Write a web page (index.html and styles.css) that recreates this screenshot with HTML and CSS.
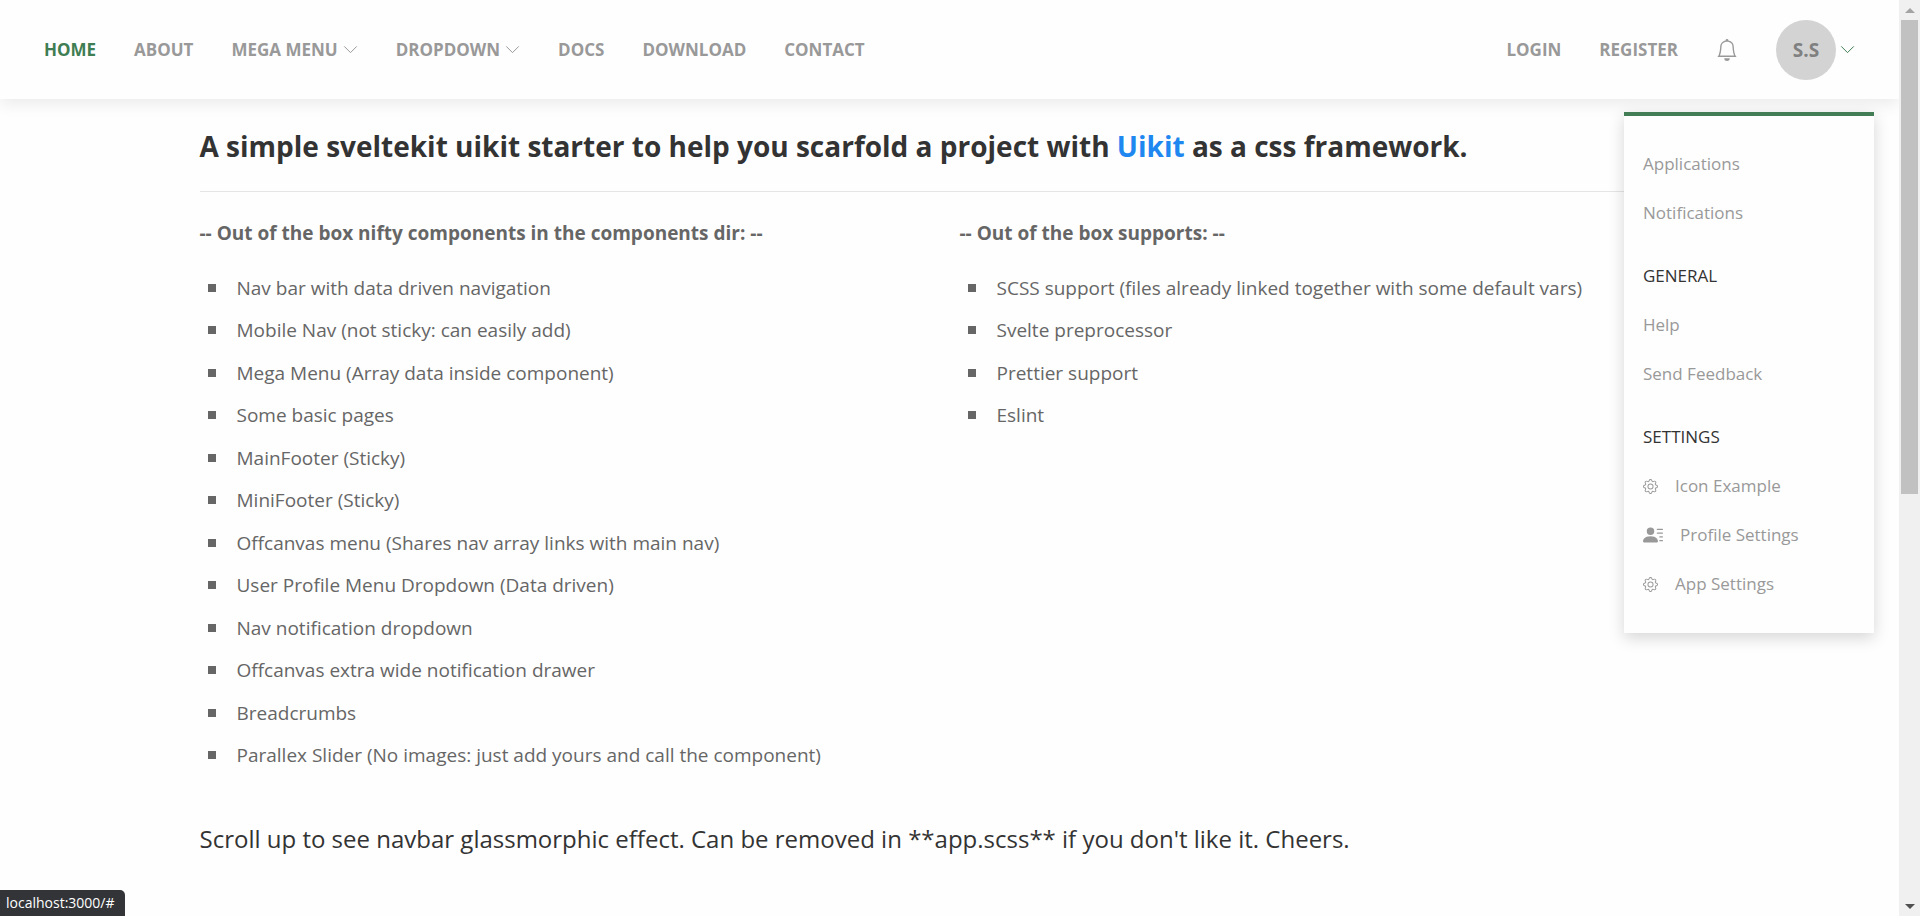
FILE: index.html
```
<!DOCTYPE html>
<html lang="en">
<head>
<meta charset="utf-8">
<title>SvelteKit UIkit Starter</title>
<link rel="stylesheet" href="styles.css">
</head>
<body>
<svg class="sprite" aria-hidden="true">
  <symbol id="chevron" viewBox="0 0 12 12"><polyline fill="none" stroke="currentColor" stroke-width=".8" points="1 3.5 6 8.5 11 3.5"/></symbol>
  <symbol id="bell" viewBox="0 0 16 16"><path fill="currentColor" d="M8 16a2 2 0 0 0 2-2H6a2 2 0 0 0 2 2zM8 1.918l-.797.161A4.002 4.002 0 0 0 4 6c0 .628-.134 2.197-.459 3.742-.16.767-.376 1.566-.663 2.258h10.244c-.287-.692-.502-1.49-.663-2.258C12.134 8.197 12 6.628 12 6a4.002 4.002 0 0 0-3.203-3.92L8 1.917zM14.22 12c.223.447.481.801.78 1H1c.299-.199.557-.553.78-1C2.68 10.2 3 6.88 3 6c0-2.42 1.72-4.44 4.005-4.901a1 1 0 1 1 1.99 0A5.002 5.002 0 0 1 13 6c0 .88.32 4.2 1.22 6z"/></symbol>
  <symbol id="gear" viewBox="0 0 16 16"><path fill="currentColor" d="M8 4.754a3.246 3.246 0 1 0 0 6.492 3.246 3.246 0 0 0 0-6.492zM5.754 8a2.246 2.246 0 1 1 4.492 0 2.246 2.246 0 0 1-4.492 0z"/><path fill="currentColor" d="M9.796 1.343c-.527-1.79-3.065-1.79-3.592 0l-.094.319a.873.873 0 0 1-1.255.52l-.292-.16c-1.64-.892-3.433.902-2.54 2.541l.159.292a.873.873 0 0 1-.52 1.255l-.319.094c-1.79.527-1.79 3.065 0 3.592l.319.094a.873.873 0 0 1 .52 1.255l-.16.292c-.892 1.64.901 3.434 2.541 2.54l.292-.159a.873.873 0 0 1 1.255.52l.094.319c.527 1.79 3.065 1.79 3.592 0l.094-.319a.873.873 0 0 1 1.255-.52l.292.16c1.64.893 3.434-.902 2.54-2.541l-.159-.292a.873.873 0 0 1 .52-1.255l.319-.094c1.79-.527 1.79-3.065 0-3.592l-.319-.094a.873.873 0 0 1-.52-1.255l.16-.292c.893-1.64-.902-3.433-2.541-2.54l-.292.159a.873.873 0 0 1-1.255-.52l-.094-.319zm-2.633.283c.246-.835 1.428-.835 1.674 0l.094.319a1.873 1.873 0 0 0 2.693 1.115l.291-.16c.764-.415 1.6.42 1.184 1.185l-.159.292a1.873 1.873 0 0 0 1.116 2.692l.318.094c.835.246.835 1.428 0 1.674l-.319.094a1.873 1.873 0 0 0-1.115 2.693l.16.291c.415.764-.42 1.6-1.185 1.184l-.291-.159a1.873 1.873 0 0 0-2.693 1.116l-.094.318c-.246.835-1.428.835-1.674 0l-.094-.319a1.873 1.873 0 0 0-2.692-1.115l-.292.16c-.764.415-1.6-.42-1.184-1.185l.159-.291A1.873 1.873 0 0 0 1.945 8.93l-.319-.094c-.835-.246-.835-1.428 0-1.674l.319-.094A1.873 1.873 0 0 0 3.06 4.377l-.16-.292c-.415-.764.42-1.6 1.185-1.184l.292.159a1.873 1.873 0 0 0 2.692-1.115l.094-.319z"/></symbol>
  <symbol id="person" viewBox="0 0 16 16"><path fill="currentColor" d="M6 8a3 3 0 1 0 0-6 3 3 0 0 0 0 6zm-5 6s-1 0-1-1 1-4 6-4 6 3 6 4-1 1-1 1H1zM11 3.5a.5.5 0 0 1 .5-.5h4a.5.5 0 0 1 0 1h-4a.5.5 0 0 1-.5-.5zm.5 2.5a.5.5 0 0 0 0 1h4a.5.5 0 0 0 0-1h-4zm2 3a.5.5 0 0 0 0 1h2a.5.5 0 0 0 0-1h-2zm0 3a.5.5 0 0 0 0 1h2a.5.5 0 0 0 0-1h-2z"/></symbol>
</svg>
<div class="shell">
  <div class="page">
    <header class="navbar">
      <nav class="nav-group" aria-label="Main">
        <a class="nav-link active" href="#">Home</a>
        <a class="nav-link" href="#">About</a>
        <a class="nav-link" href="#">Mega Menu<svg class="chevron"><use href="#chevron"/></svg></a>
        <a class="nav-link" href="#">Dropdown<svg class="chevron"><use href="#chevron"/></svg></a>
        <a class="nav-link" href="#">Docs</a>
        <a class="nav-link" href="#">Download</a>
        <a class="nav-link" href="#">Contact</a>
      </nav>
      <div class="nav-group">
        <a class="nav-link" href="#">Login</a>
        <a class="nav-link" href="#">Register</a>
        <button class="icon-button" type="button" aria-label="Notifications"><svg class="bell"><use href="#bell"/></svg></button>
        <button class="profile" type="button" aria-label="Profile menu" aria-expanded="true"><span class="avatar">S.S</span><svg class="chevron"><use href="#chevron"/></svg></button>
      </div>
      <div class="dropdown">
        <ul class="menu">
          <li><a href="#">Applications</a></li>
          <li><a href="#">Notifications</a></li>
          <li class="menu-header">General</li>
          <li><a href="#">Help</a></li>
          <li><a href="#">Send Feedback</a></li>
          <li class="menu-header">Settings</li>
          <li><a href="#"><svg class="gear"><use href="#gear"/></svg>Icon Example</a></li>
          <li><a href="#"><svg class="person"><use href="#person"/></svg>Profile Settings</a></li>
          <li><a href="#"><svg class="gear"><use href="#gear"/></svg>App Settings</a></li>
        </ul>
      </div>
    </header>
    <main class="container">
      <h1 class="title">A simple sveltekit uikit starter to help you scarfold a project with <a href="#">Uikit</a> as a css framework.</h1>
      <hr class="divider">
      <div class="columns">
        <section>
          <h2 class="subtitle">-- Out of the box nifty components in the components dir: --</h2>
          <ul class="features">
            <li>Nav bar with data driven navigation</li>
            <li>Mobile Nav (not sticky: can easily add)</li>
            <li>Mega Menu (Array data inside component)</li>
            <li>Some basic pages</li>
            <li>MainFooter (Sticky)</li>
            <li>MiniFooter (Sticky)</li>
            <li>Offcanvas menu (Shares nav array links with main nav)</li>
            <li>User Profile Menu Dropdown (Data driven)</li>
            <li>Nav notification dropdown</li>
            <li>Offcanvas extra wide notification drawer</li>
            <li>Breadcrumbs</li>
            <li>Parallex Slider (No images: just add yours and call the component)</li>
          </ul>
        </section>
        <section>
          <h2 class="subtitle">-- Out of the box supports: --</h2>
          <ul class="features">
            <li>SCSS support (files already linked together with some default vars)</li>
            <li>Svelte preprocessor</li>
            <li>Prettier support</li>
            <li>Eslint</li>
          </ul>
        </section>
      </div>
      <p class="note">Scroll up to see navbar glassmorphic effect. Can be removed in **app.scss** if you don't like it. Cheers.</p>
    </main>
  </div>
  <div class="scrollbar" aria-hidden="true">
    <svg class="arrow arrow-up" viewBox="0 0 10 5"><path fill="currentColor" d="M0 5 5 0l5 5z"/></svg>
    <div class="track"><div class="thumb"></div></div>
    <svg class="arrow arrow-down" viewBox="0 0 10 5"><path fill="currentColor" d="M0 0h10L5 5z"/></svg>
  </div>
</div>
<div class="status">localhost:3000/#</div>
</body>
</html>
```
FILE: styles.css
```
* { box-sizing: border-box; }
body {
  margin: 0;
  background: #fefefe;
  color: #666;
  font-family: "Open Sans", "Noto Sans", sans-serif;
  font-size: 19px;
  line-height: 30px;
}
a { color: inherit; text-decoration: none; }
button { border: 0; padding: 0; background: none; color: inherit; font: inherit; cursor: pointer; }
ul { margin: 0; padding: 0; list-style: none; }
.sprite { display: none; }
.shell { display: flex; height: 100vh; overflow: hidden; }
.page { flex: 1; min-width: 0; overflow: hidden; }

.navbar {
  position: relative;
  display: flex;
  justify-content: space-between;
  align-items: center;
  height: 99px;
  padding: 0 44px;
  background: #fefefe;
  box-shadow: 0 5px 15px rgba(0, 0, 0, 0.08);
  color: #999;
}
.nav-group { display: flex; align-items: center; gap: 38px; }
.nav-link {
  display: flex;
  align-items: center;
  gap: 5px;
  font-size: 17px;
  font-weight: 700;
  text-transform: uppercase;
}
.nav-link.active { color: #3f7d52; }
.chevron { width: 15px; height: 15px; }
.icon-button { display: flex; }
.bell { width: 22px; height: 22px; }
.profile { display: flex; align-items: center; gap: 4px; color: #3f7d52; }
.avatar {
  width: 60px;
  border-radius: 50%;
  background: #d3d3d3;
  color: #808080;
  font-weight: 700;
  line-height: 60px;
  text-align: center;
}

.dropdown {
  position: absolute;
  top: 112px;
  right: 25px;
  z-index: 1;
  width: 250px;
  padding: 24px 19px;
  border-top: 4px solid #427d55;
  background: #fefefe;
  box-shadow: 0 5px 15px rgba(0, 0, 0, 0.16);
  font-size: 17px;
}
.menu li { padding: 9px 0 10px; }
.menu li.menu-header { margin-top: 14px; color: #333; text-transform: uppercase; }
.menu a { display: flex; align-items: center; gap: 17px; }
.gear { width: 15px; height: 15px; }
.person { width: 20px; height: 20px; }

.container { max-width: 1500px; margin: 0 auto; padding-top: 25px; }
.title { margin: 0; color: #333; font-size: 28px; line-height: 44px; font-weight: 700; }
.title a { color: #1e87f0; }
.divider { margin: 23px 0 26px; border: 0; border-top: 1px solid #e5e5e5; }
.columns { display: grid; grid-template-columns: 1fr 1fr; gap: 20px; }
.subtitle { margin: 0 0 25px; font-size: 19px; line-height: 30px; font-weight: 700; }
.features li { display: flex; align-items: center; gap: 21px; padding-left: 8px; margin-bottom: 12px; }
.features li:nth-child(even) { margin-bottom: 13px; }
.features li::before { content: ""; width: 8px; height: 8px; background: #666; }
.note { margin: 38px 0 0; color: #333; font-size: 24px; line-height: 36px; }

.scrollbar {
  display: flex;
  flex-direction: column;
  align-items: center;
  width: 21px;
  padding: 8px 2px 7px;
  background: #f0f0f0;
}
.arrow { width: 10px; height: 5px; }
.arrow-up { color: #a3a3a3; }
.arrow-down { color: #505050; }
.track { flex: 1; align-self: stretch; padding: 7px 0; }
.thumb { height: 54%; background: #c1c1c1; }

.status {
  position: fixed;
  left: 0;
  bottom: 0;
  padding: 0 10px 0 6px;
  border-top-right-radius: 5px;
  background: #323438;
  color: #fff;
  font-size: 14px;
  line-height: 26px;
}
```
